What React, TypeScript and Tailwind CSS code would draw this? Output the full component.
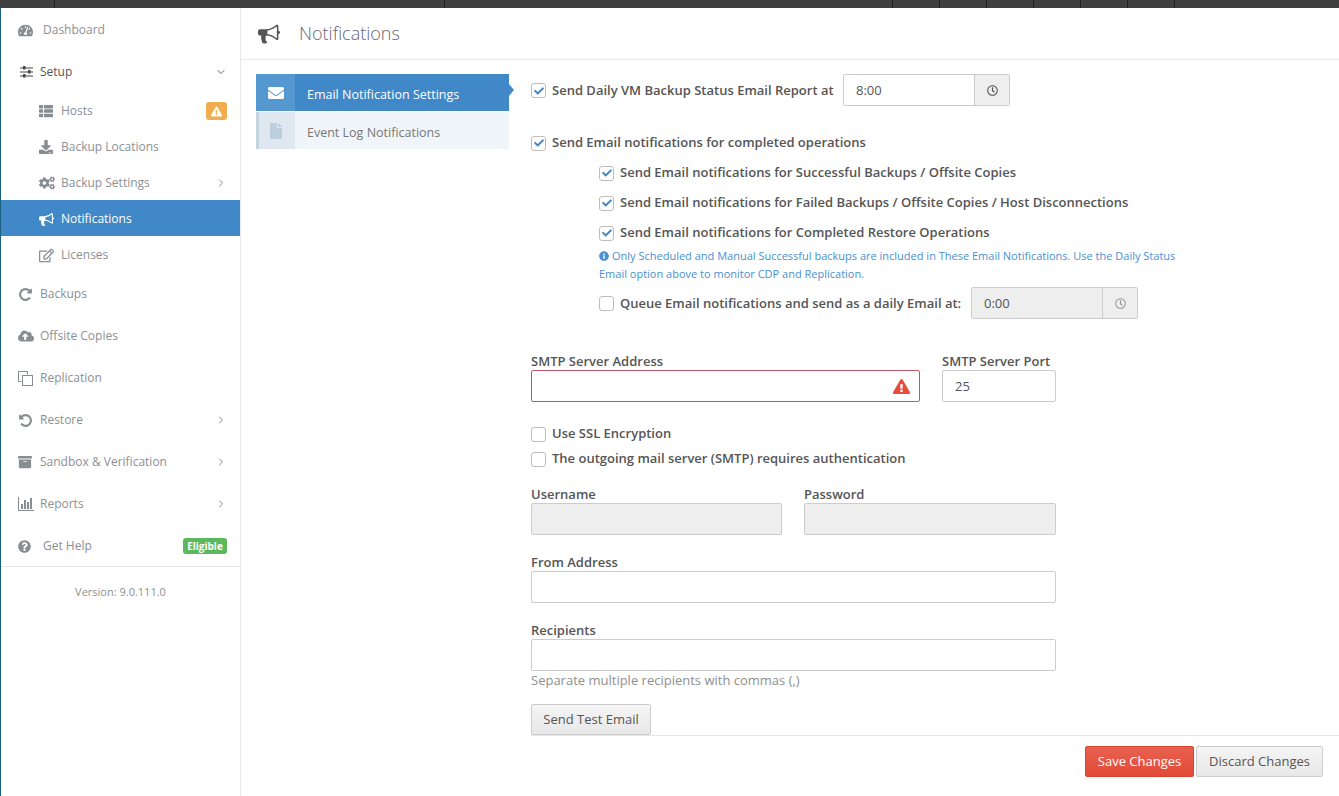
import type { ReactNode } from "react";
import { ChevronDown, ChevronRight } from "lucide-react";
import {
  FaArchive,
  FaCheck,
  FaCloudUploadAlt,
  FaCogs,
  FaDownload,
  FaEnvelope,
  FaExclamationTriangle,
  FaFile,
  FaInfoCircle,
  FaQuestionCircle,
  FaRegClock,
  FaRegEdit,
  FaTachometerAlt,
  FaThList,
} from "react-icons/fa";

const topDividers = ["w-[55px]", "w-[390px]", "w-[448px]", "w-[47px]", "w-[47px]", "w-[47px]", "w-[47px]", "w-[47px]", "w-[47px]"];

// font awesome 4 shapes, the newer packs draw these differently
function Fa4({ size, d }: { size: number; d: string }) {
  return (
    <svg width={size} height={size} viewBox="0 0 1792 1792" fill="currentColor">
      <path d={d} />
    </svg>
  );
}

const bullhorn =
  "M1664 640q53 0 90.5 37.5t37.5 90.5-37.5 90.5-90.5 37.5v384q0 52-38 90t-90 38q-417-347-812-380-58 19-91 66t-31 100.5 40 92.5q-20 33-23 65.5t6 58 33.5 55 48 50 61.5 50.5q-29 58-111.5 83t-168.5 11.5-132-55.5q-7-23-29.5-87.5t-32-94.5-23-89-15-101 3.5-98.5 22-110.5h-122q-66 0-113-47t-47-113v-192q0-66 47-113t113-47h480q435 0 896-384 52 0 90 38t38 90v384zm-128 604v-954q-394 302-768 343v270q377 42 768 341z";
const repeat =
  "M1664 256v448q0 26-19 45t-45 19h-448q-42 0-59-40-17-39 14-69l138-138q-148-137-349-137-104 0-198.5 40.5t-163.5 109.5-109.5 163.5-40.5 198.5 40.5 198.5 109.5 163.5 163.5 109.5 198.5 40.5q119 0 225-52t179-147q7-10 23-12 15 0 25 9l137 138q9 8 9.5 20.5t-7.5 22.5q-109 132-264 204.5t-327 72.5q-156 0-298-61t-245-164-164-245-61-298 61-298 164-245 245-164 298-61q147 0 284.5 55.5t244.5 156.5l130-129q29-31 70-14 39 17 39 59z";
const undo =
  "M1664 896q0 156-61 298t-164 245-245 164-298 61q-172 0-327-72.5t-264-204.5q-7-10-6.5-22.5t8.5-20.5l137-138q10-9 25-9 16 2 23 12 73 95 179 147t225 52q104 0 198.5-40.5t163.5-109.5 109.5-163.5 40.5-198.5-40.5-198.5-109.5-163.5-163.5-109.5-198.5-40.5q-98 0-188 35.5t-160 101.5l137 138q31 30 14 69-17 40-59 40h-448q-26 0-45-19t-19-45v-448q0-42 40-59 39-17 69 14l130 129q107-101 244.5-156.5t284.5-55.5q156 0 298 61t245 164 164 245 61 298z";

function Sliders() {
  return (
    <svg width="13" height="12" viewBox="0 0 13 12" fill="currentColor" className="ml-[2px]">
      <rect x="0" y="1.5" width="13" height="1" />
      <rect x="0" y="5.5" width="13" height="1" />
      <rect x="0" y="9.5" width="13" height="1" />
      <rect x="3" y="0" width="2.5" height="3.5" rx="0.5" />
      <rect x="8" y="4" width="2.5" height="3.5" rx="0.5" />
      <rect x="3" y="8" width="2.5" height="3.5" rx="0.5" />
    </svg>
  );
}

function Clone() {
  return (
    <svg width="15" height="15" viewBox="0 0 15 15" fill="none" stroke="currentColor">
      <path d="M9.5 3.5v-3h-9v10h3" />
      <rect x="4.5" y="4.5" width="10" height="10" />
    </svg>
  );
}

function Bars() {
  return (
    <svg width="16" height="14" viewBox="0 0 16 14" fill="currentColor">
      <rect x="0" y="0" width="1" height="14" />
      <rect x="0" y="13" width="16" height="1" />
      <rect x="3" y="7" width="2" height="5" />
      <rect x="6" y="3" width="2" height="9" />
      <rect x="9" y="5" width="2" height="7" />
      <rect x="12" y="1" width="2" height="11" />
    </svg>
  );
}

function TopItem({ icon, label, gap, chevron, dark, children }: { icon: ReactNode; label: string; gap?: boolean; chevron?: boolean; dark?: boolean; children?: ReactNode }) {
  return (
    <div className="flex h-[42px] items-center pl-[17px] pr-[13px] pt-[2px]">
      <span className={`flex w-[22px] shrink-0 items-center ${dark ? "text-[#444]" : "text-[#888d92]"}`}>{icon}</span>
      <span className={`${gap ? "ml-[3px]" : ""} flex-1 ${dark ? "text-[#555]" : "text-[#8b9095]"}`}>{label}</span>
      {chevron && <ChevronRight className="text-[#888d92]" size={12} />}
      {children}
    </div>
  );
}

function SubItem({ icon, label, active, chevron, children }: { icon: ReactNode; label: string; active?: boolean; chevron?: boolean; children?: ReactNode }) {
  return (
    <div className={`flex h-9 items-center pl-[38px] pr-[13px] pt-[2px] ${active ? "bg-[#4088c8] text-white" : "text-[#8b9095]"}`}>
      <span className={`flex w-[22px] shrink-0 items-center ${active ? "text-white" : "text-[#888d92]"}`}>{icon}</span>
      <span className="flex-1">{label}</span>
      {chevron && <ChevronRight className="text-[#888d92]" size={12} />}
      {children}
    </div>
  );
}

function Check({ on, label, className }: { on?: boolean; label: string; className?: string }) {
  return (
    <label className={`flex items-center gap-[6px] font-semibold text-[#555] ${className ?? ""}`}>
      <span className="flex size-[15px] shrink-0 items-center justify-center rounded-[3px] border border-[#bdbdbd] bg-white text-[#3f88c8]">
        {on && <FaCheck size={10} />}
      </span>
      {label}
    </label>
  );
}

function TextBox({ className, disabled, value, error }: { className: string; disabled?: boolean; value?: string; error?: boolean }) {
  return (
    <div
      className={`flex h-8 items-center rounded-[2px] border px-3 text-[#555] ${disabled ? "border-[#ccc] bg-[#eee]" : "bg-white"} ${error ? "border-[#c0576b]" : disabled ? "" : "border-[#ccc]"} ${className}`}
    >
      <span className="flex-1 pt-[2px]">{value}</span>
      {error && <FaExclamationTriangle className="mr-[-3px] text-[#e74c3c]" size={17} />}
    </div>
  );
}

function TimeBox({ value, disabled }: { value: string; disabled?: boolean }) {
  return (
    <div className="flex h-8 w-[167px] rounded-[2px] border border-[#ccc] text-[#555]">
      <div className={`flex flex-1 items-center pl-3 pt-[2px] ${disabled ? "bg-[#eee]" : "bg-white"}`}>{value}</div>
      <div className={`flex w-[35px] items-center justify-center border-l border-[#ccc] bg-[#eee] ${disabled ? "text-[#999]" : "text-[#555]"}`}>
        <FaRegClock size={11} />
      </div>
    </div>
  );
}

function Field({ label, children, className }: { label: string; children: ReactNode; className?: string }) {
  return (
    <div className={className}>
      <div className="h-[17px] font-semibold leading-[17px] text-[#555]">{label}</div>
      {children}
    </div>
  );
}

export default function App() {
  return (
    <div className="flex h-screen flex-col overflow-hidden bg-white font-['Open_Sans',sans-serif] text-[13px]">
      {/* top bar */}
      <div className="flex h-2 shrink-0 bg-[#3f3f3f]">
        {topDividers.map((w, i) => (
          <div key={i} className={`${w} border-r border-[#222]`} />
        ))}
      </div>

      <div className="flex flex-1">
        {/* sidebar */}
        <aside className="w-[241px] shrink-0 border-l border-r border-l-[#17607e] border-r-[#e7e7e7] text-[12px]">
          <TopItem icon={<FaTachometerAlt size={15} />} label="Dashboard" gap />
          <TopItem icon={<Sliders />} label="Setup" dark>
            <ChevronDown className="text-[#666]" size={12} />
          </TopItem>
          <SubItem icon={<FaThList size={14} />} label="Hosts">
            <span className="flex h-[18px] w-[21px] items-center justify-center rounded-[3px] bg-[#f0ad4e] text-white">
              <FaExclamationTriangle size={11} />
            </span>
          </SubItem>
          <SubItem icon={<FaDownload size={14} />} label="Backup Locations" />
          <SubItem icon={<FaCogs size={16} />} label="Backup Settings" chevron />
          <SubItem icon={<Fa4 d={bullhorn} size={15} />} label="Notifications" active />
          <SubItem icon={<FaRegEdit size={15} />} label="Licenses" />
          <TopItem icon={<Fa4 d={repeat} size={15} />} label="Backups" />
          <TopItem icon={<FaCloudUploadAlt size={16} />} label="Offsite Copies" />
          <TopItem icon={<Clone />} label="Replication" />
          <TopItem icon={<Fa4 d={undo} size={15} />} label="Restore" chevron />
          <TopItem icon={<FaArchive size={14} />} label="Sandbox & Verification" chevron />
          <TopItem icon={<Bars />} label="Reports" chevron />
          <div className="border-b border-[#e7e7e7]">
            <TopItem icon={<FaQuestionCircle size={13} />} label="Get Help" gap>
              <span className="flex h-4 w-11 items-center justify-center rounded-[3px] bg-[#5cb85c] text-[10px] font-bold text-white">Eligible</span>
            </TopItem>
          </div>
          <div className="mt-[17px] text-center text-[11px] text-[#8b9095]">Version: 9.0.111.0</div>
        </aside>

        {/* main */}
        <main className="flex min-w-0 flex-1 flex-col">
          <header className="flex h-[52px] shrink-0 items-center border-b border-[#e7e7e7] pl-[17px]">
            <span className="text-[#555]">
              <Fa4 d={bullhorn} size={22} />
            </span>
            <h1 className="ml-[19px] text-[18px] font-light text-[#667]">Notifications</h1>
          </header>

          <div className="flex flex-1 pl-[15px] pt-[14px]">
            {/* tabs */}
            <div className="w-[253px] shrink-0 text-[12.5px]">
              <div className="relative flex h-[37px] items-center bg-[#4088c8] text-white">
                <span className="flex h-full w-[39px] items-center justify-center bg-[#5598d0]">
                  <FaEnvelope size={16} />
                </span>
                <span className="ml-3 pt-[6px]">Email Notification Settings</span>
                <span className="absolute left-full top-[10px] border-y-[6px] border-l-[5px] border-y-transparent border-l-[#4088c8]" />
              </div>
              <div className="mt-px flex h-[37px] items-center bg-[#f0f5f9] text-[#777]">
                <span className="flex h-full w-[39px] items-center justify-center border-l-[3px] border-[#c5d5e0] bg-[#dfe8f0] text-[#bccfdc]">
                  <FaFile className="mr-[3px]" size={16} />
                </span>
                <span className="ml-3 pt-[6px]">Event Log Notifications</span>
              </div>
            </div>

            {/* form */}
            <div className="ml-[22px] flex-1">
              <div className="flex h-8 items-center">
                <Check on label="Send Daily VM Backup Status Email Report at" className="h-full w-[312px] pt-[1px]" />
                <TimeBox value="8:00" />
              </div>
              <Check on label="Send Email notifications for completed operations" className="mt-[27px] h-[20px]" />
              <Check on label="Send Email notifications for Successful Backups / Offsite Copies" className="ml-[68px] mt-[10px] h-[20px]" />
              <Check on label="Send Email notifications for Failed Backups / Offsite Copies / Host Disconnections" className="ml-[68px] mt-[10px] h-[20px]" />
              <Check on label="Send Email notifications for Completed Restore Operations" className="ml-[68px] mt-[10px] h-[20px]" />
              <p className="ml-[68px] mt-[4px] w-[590px] text-[11px] leading-[18px] text-[#4a90d0]">
                <FaInfoCircle className="mr-[3px] inline align-[-1px]" size={10} />
                Only Scheduled and Manual Successful backups are included in These Email Notifications. Use the Daily Status Email option above to monitor CDP and Replication.
              </p>
              <div className="ml-[68px] mt-[4px] flex h-8 items-center">
                <Check label="Queue Email notifications and send as a daily Email at:" className="h-full w-[372px] pt-[1px]" />
                <TimeBox value="0:00" disabled />
              </div>

              <div className="mt-[34px] flex w-[525px] gap-[22px]">
                <Field label="SMTP Server Address" className="w-[389px]">
                  <TextBox className="w-full" error />
                </Field>
                <Field label="SMTP Server Port" className="flex-1">
                  <TextBox className="w-full" value="25" />
                </Field>
              </div>
              <Check label="Use SSL Encryption" className="mt-[22px] h-[20px]" />
              <Check label="The outgoing mail server (SMTP) requires authentication" className="mt-[5px] h-[20px]" />

              <div className="mt-[17px] flex w-[525px] gap-[22px]">
                <Field label="Username" className="w-[251px]">
                  <TextBox className="w-full" disabled />
                </Field>
                <Field label="Password" className="flex-1">
                  <TextBox className="w-full" disabled />
                </Field>
              </div>
              <Field label="From Address" className="mt-[19px] w-[525px]">
                <TextBox className="w-full" />
              </Field>
              <Field label="Recipients" className="mt-[19px] w-[525px]">
                <TextBox className="w-full" />
              </Field>
              <div className="h-[18px] leading-[18px] text-[#8f8f8f]">Separate multiple recipients with commas (,)</div>

              <button className="mt-[15px] block h-[31px] w-[120px] rounded-[2px] border border-[#ccc] bg-gradient-to-b from-[#f5f5f5] to-[#e8e8e8] text-[#555]">Send Test Email</button>
              <div className="flex justify-end gap-[2px] border-t border-[#e7e7e7] pr-4 pt-[10px]">
                <button className="h-[31px] w-[109px] rounded-[2px] border border-[#d9432f] bg-gradient-to-b from-[#e9604f] to-[#e24a38] text-white">Save Changes</button>
                <button className="h-[31px] w-[127px] rounded-[2px] border border-[#ccc] bg-gradient-to-b from-[#f5f5f5] to-[#e8e8e8] text-[#555]">Discard Changes</button>
              </div>
            </div>
          </div>
        </main>
      </div>
    </div>
  );
}
